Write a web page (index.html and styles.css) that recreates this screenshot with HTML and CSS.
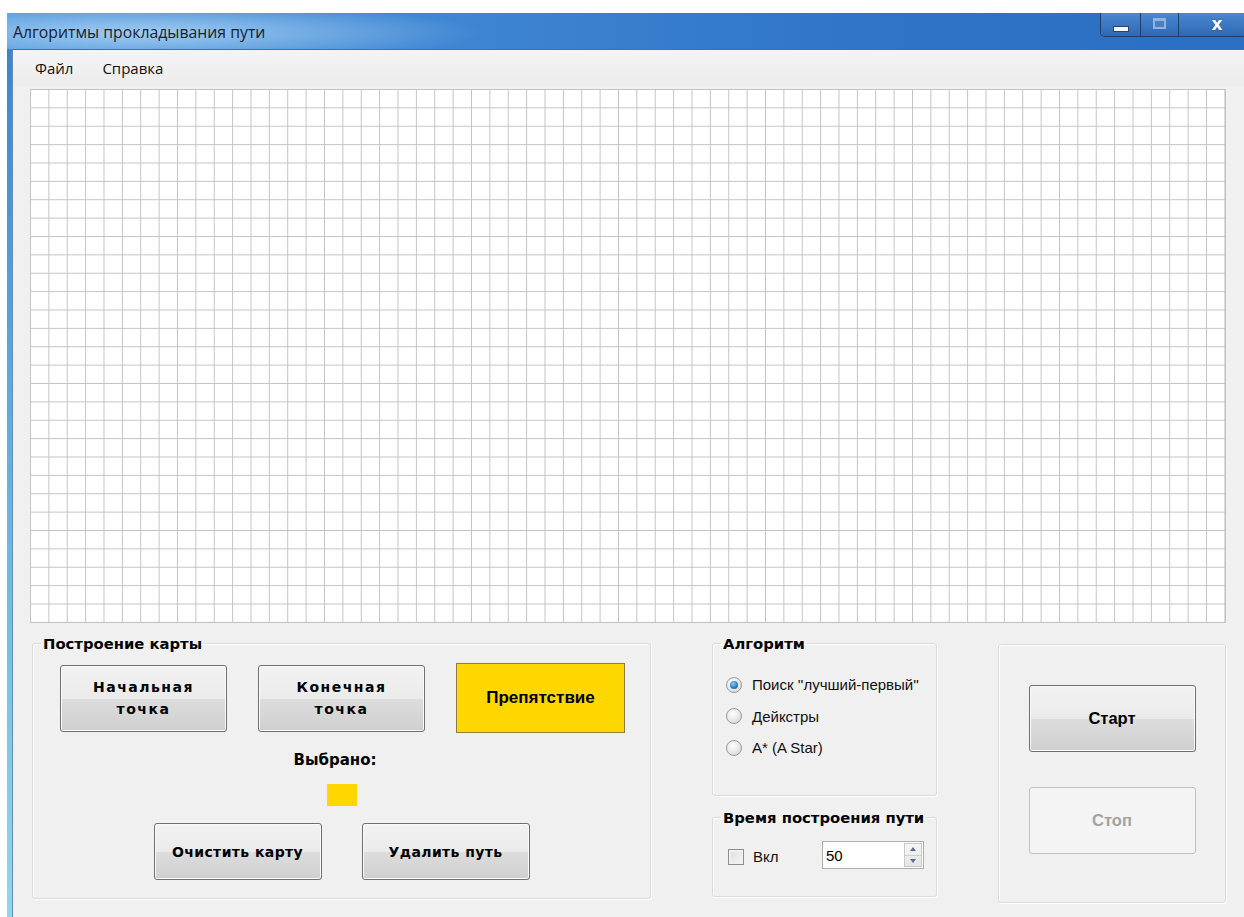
FILE: index.html
```html
<!DOCTYPE html>
<html lang="ru">
<head>
<meta charset="utf-8">
<title>Алгоритмы прокладывания пути</title>
<link rel="stylesheet" href="styles.css">
</head>
<body>
<div class="window">
  <div class="titlebar">
    <span class="title">Алгоритмы прокладывания пути</span>
    <div class="caption-buttons">
      <span class="cap cap-min"><i class="glyph-min"></i></span>
      <span class="cap cap-max"><i class="glyph-max"></i></span>
      <span class="cap cap-close">x</span>
    </div>
  </div>
  <div class="client">
    <div class="menubar">
      <span class="menu-item">Файл</span>
      <span class="menu-item">Справка</span>
    </div>
    <div class="map"></div>
    <div class="panel">
      <fieldset class="group group-map">
        <legend>Построение карты</legend>
        <div class="row-tools">
          <button class="btn btn-wide">Начальная<br>точка</button>
          <button class="btn btn-wide">Конечная<br>точка</button>
          <button class="btn btn-obstacle">Препятствие</button>
        </div>
        <div class="selected">
          <span class="selected-label">Выбрано:</span>
          <span class="swatch"></span>
        </div>
        <div class="row-actions">
          <button class="btn btn-action">Очистить карту</button>
          <button class="btn btn-action">Удалить путь</button>
        </div>
      </fieldset>
      <div class="column">
        <fieldset class="group group-algo">
          <legend>Алгоритм</legend>
          <div class="algo-list">
            <label class="radio"><span class="radio-dot checked"></span>Поиск ''лучший-первый''</label>
            <label class="radio"><span class="radio-dot"></span>Дейкстры</label>
            <label class="radio"><span class="radio-dot"></span>A* (A Star)</label>
          </div>
        </fieldset>
        <fieldset class="group group-time">
          <legend>Время построения пути</legend>
          <div class="time-row">
            <span class="checkbox"></span>
            <span class="check-label">Вкл</span>
            <div class="spin">
              <span class="spin-value">50</span>
              <div class="spin-arrows">
                <span class="spin-up"></span>
                <span class="spin-down"></span>
              </div>
            </div>
          </div>
        </fieldset>
      </div>
      <div class="group group-run">
        <button class="btn btn-run">Старт</button>
        <button class="btn btn-run btn-disabled">Стоп</button>
      </div>
    </div>
  </div>
</div>
</body>
</html>
```

FILE: styles.css
```css
html, body {
  margin: 0;
  padding: 0;
  background: #ffffff;
  width: 1244px;
  height: 917px;
  overflow: hidden;
}

.window {
  margin: 13px 0 0 7px;
  width: 1237px;
  height: 904px;
  padding: 0 0 0 5px;
  box-sizing: border-box;
  background: linear-gradient(to bottom, #3c7fce 0%, #5da8de 40%, #8fd8e8 100%);
  display: flex;
  flex-direction: column;
  font-family: "Liberation Sans", Arial, sans-serif;
}

/* title bar */
.titlebar {
  height: 36px;
  margin-left: -5px;
  display: flex;
  align-items: flex-start;
  justify-content: space-between;
  background:
    radial-gradient(ellipse 340px 30px at 135px 20px, rgba(190, 225, 250, 0.75), rgba(190, 225, 250, 0) 100%),
    linear-gradient(to right, #4f95da 0%, #3f86d3 35%, #2f74c6 70%, #2b6fc2 100%);
}

.title {
  font-family: "Open Sans", "Liberation Sans", sans-serif;
  font-size: 15.8px;
  color: #15222f;
  padding: 8px 0 0 6px;
}

.caption-buttons {
  display: flex;
  flex-shrink: 0;
  margin-right: -12px;
  height: 23px;
  border: 1px solid #1c3f70;
  border-top: none;
  border-radius: 0 0 5px 5px;
  overflow: hidden;
  box-shadow: inset 0 0 0 1px rgba(160, 200, 240, 0.55);
}

.cap {
  display: flex;
  align-items: center;
  justify-content: center;
  height: 23px;
  background: linear-gradient(to bottom, #4a88cf, #2f68b4);
}

.cap-min {
  width: 39px;
  border-right: 1px solid #1c3f70;
}

.cap-max {
  width: 37px;
  border-right: 1px solid #1c3f70;
}

.cap-close {
  width: 76px;
  color: #ffffff;
  font: bold 17px "DejaVu Sans", sans-serif;
  line-height: 20px;
  padding-bottom: 2px;
  box-sizing: border-box;
  text-shadow: 0 0 2px #1c3f70;
}

.glyph-min {
  display: block;
  width: 14px;
  height: 4px;
  margin-top: 8px;
  background: #f4f8fc;
  border: 1px solid #23466f;
}

.glyph-max {
  display: block;
  width: 9px;
  height: 6px;
  margin-bottom: 2px;
  border: 2px solid #8fb4de;
  border-top-width: 3px;
  background: #4a80c2;
}

/* client area */
.client {
  flex: 1;
  background: #f0f0f0;
  border-top: 1px solid #4c6e96;
  border-left: 1px solid #6b8aae;
  display: flex;
  flex-direction: column;
}

.menubar {
  height: 36px;
  display: flex;
  align-items: center;
  padding-left: 22px;
  gap: 29px;
  background: linear-gradient(to bottom, #f4f4f4, #ececec);
  font-family: "Open Sans", "Liberation Sans", sans-serif;
  font-size: 15px;
  color: #111;
}

/* map grid */
.map {
  margin: 3px 0 0 17px;
  width: 1195px;
  height: 533px;
  background-color: #ffffff;
  background-image:
    linear-gradient(to right, #c3c3c3 0, #c3c3c3 1px, transparent 1px),
    linear-gradient(to bottom, #c3c3c3 0, #c3c3c3 1px, transparent 1px);
  background-size: 18.385px 18.38px;
  border-right: 1px solid #c3c3c3;
  border-bottom: 1px solid #c3c3c3;
}

/* bottom panel */
.panel {
  display: flex;
  align-items: flex-start;
  padding: 12px 0 0 19px;
  gap: 61px;
}

.group {
  margin: 0;
  padding: 0;
  border: 1px solid #dadada;
  border-radius: 3px;
  box-shadow: inset 1px 1px 0 #ffffff, 1px 1px 0 #ffffff;
  box-sizing: border-box;
  min-width: 0;
}

.group legend {
  font: bold 14.8px "DejaVu Sans", sans-serif;
  line-height: 17px;
  color: #000;
  padding: 0 2px;
  margin-left: 8px;
}

.group-map {
  width: 619px;
  height: 264px;
  display: flex;
  flex-direction: column;
  align-items: center;
}

.row-tools {
  display: flex;
  align-items: center;
  gap: 31px;
  margin-top: 11px;
  align-self: flex-start;
  margin-left: 27px;
}

.btn {
  font: bold 14px "DejaVu Sans", sans-serif;
  color: #000;
  border: 1px solid #707070;
  border-radius: 3px;
  padding: 0;
  box-shadow: inset 0 0 0 1px #fafafa;
  background: linear-gradient(to bottom, #f2f2f2 0%, #ebebeb 50%, #dddddd 51%, #cfcfcf 100%);
}

.btn-wide {
  width: 167px;
  height: 67px;
  letter-spacing: 1.5px;
  line-height: 22px;
}

.btn-obstacle {
  width: 169px;
  height: 70px;
  background: #ffd700;
  border: 1px solid #8f7c3e;
  box-shadow: none;
  border-radius: 0;
  font-family: "Liberation Sans", Arial, sans-serif;
  font-size: 17px;
}

.selected {
  display: flex;
  flex-direction: column;
  align-items: center;
  margin-top: 19px;
}

.selected-label {
  font: bold 15px "DejaVu Sans", sans-serif;
  line-height: 17px;
  margin-right: 13px;
}

.swatch {
  display: block;
  width: 30px;
  height: 22px;
  margin-top: 15px;
  background: #ffd700;
}

.row-actions {
  display: flex;
  gap: 40px;
  margin-top: 17px;
}

.btn-action {
  width: 168px;
  height: 57px;
  letter-spacing: 0.4px;
}

.column {
  display: flex;
  flex-direction: column;
  width: 225px;
}

.group-algo {
  width: 225px;
  height: 161px;
}

.algo-list {
  padding: 17px 0 0 13px;
}

.radio {
  display: flex;
  align-items: center;
  height: 31.5px;
  font-size: 15px;
  color: #111;
}

.radio-dot {
  width: 16px;
  height: 16px;
  margin-right: 10px;
  border-radius: 50%;
  border: 1px solid #9a9a9a;
  background: radial-gradient(circle at 40% 35%, #ffffff 0%, #e6e6e6 55%, #cfcfcf 100%);
  box-sizing: border-box;
  position: relative;
}

.radio-dot.checked::after {
  content: "";
  position: absolute;
  left: 3px;
  top: 3px;
  width: 8px;
  height: 8px;
  border-radius: 50%;
  background: radial-gradient(circle at 40% 35%, #8fd0f4 0%, #2a7fc0 55%, #0f4f8a 100%);
}

.group-time {
  width: 225px;
  height: 88px;
  margin-top: 13px;
}

.time-row {
  display: flex;
  align-items: center;
  padding: 15px 0 0 15px;
}

.checkbox {
  width: 16px;
  height: 16px;
  margin-top: 4px;
  border: 1px solid #8f8f8f;
  box-sizing: border-box;
  background: linear-gradient(135deg, #dcdcdc, #f6f6f6);
  box-shadow: inset 0 0 0 2px #f0f0f0;
}

.check-label {
  margin-left: 9px;
  margin-top: 3px;
  width: 69px;
  font-size: 15px;
  color: #111;
}

.spin {
  width: 102px;
  height: 28px;
  box-sizing: border-box;
  border: 1px solid #abadb3;
  background: #ffffff;
  display: flex;
  align-items: center;
  justify-content: space-between;
}

.spin-value {
  font-size: 15px;
  padding-left: 3px;
  color: #000;
}

.spin-arrows {
  display: flex;
  flex-direction: column;
  width: 18px;
  height: 24px;
  margin-right: 1px;
  border: 1px solid #c9c9c9;
  box-sizing: border-box;
  background: linear-gradient(to bottom, #f6f6f6, #e4e4e4);
}

.spin-up, .spin-down {
  flex: 1;
  position: relative;
}

.spin-up {
  border-bottom: 1px solid #d0d0d0;
}

.spin-up::after, .spin-down::after {
  content: "";
  position: absolute;
  left: 5px;
  width: 0;
  height: 0;
  border-left: 3px solid transparent;
  border-right: 3px solid transparent;
}

.spin-up::after {
  top: 3px;
  border-bottom: 4px solid #5a6e8a;
}

.spin-down::after {
  top: 3px;
  border-top: 4px solid #5a6e8a;
}

.group-run {
  width: 228px;
  height: 259px;
  margin-top: 9px;
  display: flex;
  flex-direction: column;
  align-items: center;
  padding-top: 40px;
  gap: 35px;
}

.btn-run {
  width: 167px;
  height: 67px;
  font-family: "Liberation Sans", Arial, sans-serif;
  font-size: 16.5px;
}

.btn-disabled {
  color: #a3a3a3;
  border-color: #c2c2c2;
  background: #f4f4f4;
  box-shadow: none;
}
```
